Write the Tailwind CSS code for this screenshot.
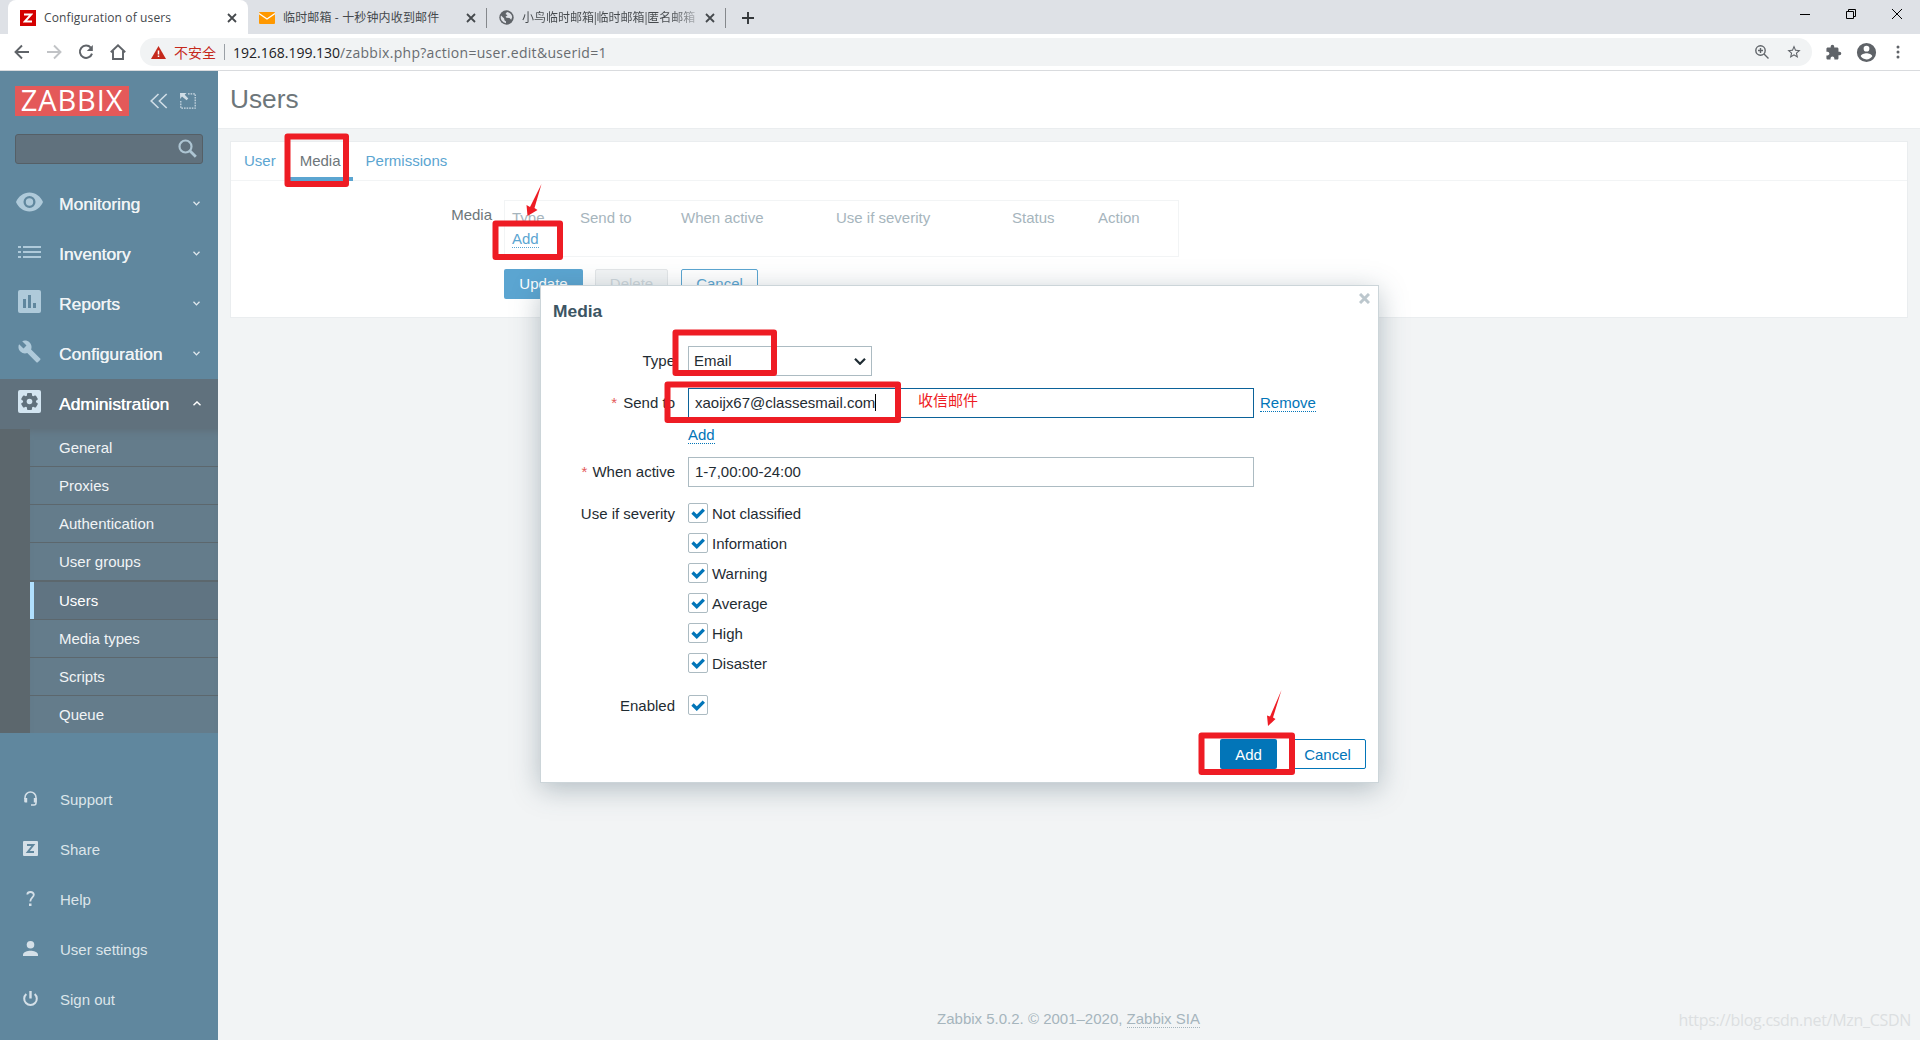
<!DOCTYPE html>
<html lang="en">
<head>
<meta charset="utf-8">
<title>Configuration of users</title>
<script src="https://cdn.jsdelivr.net/npm/@tailwindcss/browser@4"></script>
</head>
<body class="relative flex h-[1040px] w-[1920px] flex-col overflow-hidden bg-[#f2f4f5] font-['Liberation_Sans','Noto_Sans_CJK_SC',sans-serif] text-[15px] leading-[17px] text-[#1f2c33]">

<!-- Browser chrome -->
<div class="flex h-[34px] shrink-0 bg-[#dee1e6] pl-2 font-['Open_Sans','Noto_Sans_CJK_SC',sans-serif] text-[12px] text-[#45494d]">
  <div class="flex w-[240px] items-center rounded-t-lg bg-white pl-3 pt-px">
    <div class="flex size-4 items-center justify-center bg-[#d40000]"><svg class="size-[10px]" viewBox="0 0 10 10" fill="none" stroke="#fff" stroke-width="2"><path d="M1 1.5h7.2L1.8 8.5H9"/></svg></div>
    <span class="ml-2 w-[180px] whitespace-nowrap tracking-[0.12px]">Configuration of users</span>
    <svg class="ml-[3px] size-[10px]" viewBox="0 0 10 10" stroke="#45494d" stroke-width="1.8"><path d="M1 1l8 8M9 1l-8 8"/></svg>
  </div>
  <div class="flex w-[238px] items-center pl-[11px] pt-px">
    <svg class="h-3 w-4" viewBox="0 0 16 12"><rect width="16" height="12" rx="1" fill="#ff9800"/><path d="M0 1.5l8 5.5 8-5.5" fill="none" stroke="#fff" stroke-width="1.3"/></svg>
    <span class="ml-2 w-[183px] whitespace-nowrap tracking-[0.15px]">临时邮箱 - 十秒钟内收到邮件</span>
    <svg class="size-[10px]" viewBox="0 0 10 10" stroke="#45494d" stroke-width="1.8"><path d="M1 1l8 8M9 1l-8 8"/></svg>
  </div>
  <div class="flex w-[239px] items-center pt-px">
    <div class="h-5 w-px bg-[#85888c]"></div>
    <svg class="ml-[12px] size-[15px]" viewBox="0 0 15 15"><circle cx="7.5" cy="7.5" r="7.2" fill="#5f6368"/><path d="M2 5.5l3.2 3 .2 1.8 1.6 1.2v1.8A6 6 0 0 1 2 5.500zM8 2l-1.500 2 2 1.300-2 1.500 1 1 3 .2 1.700 1.800 1-2.800A6 6 0 0 0 8 2z" fill="#dee1e6"/></svg>
    <span class="ml-[8px] w-[176px] whitespace-nowrap bg-linear-to-r from-[#45494d] from-85% to-[#b9bcc1] bg-clip-text text-transparent">小鸟临时邮箱<span class="-mx-[2px]">|</span>临时邮箱<span class="-mx-[2px]">|</span>匿名邮箱</span>
    <svg class="ml-[7px] size-[10px]" viewBox="0 0 10 10" stroke="#45494d" stroke-width="1.8"><path d="M1 1l8 8M9 1l-8 8"/></svg>
  </div>
  <div class="flex items-center pt-px">
    <div class="h-5 w-px bg-[#85888c]"></div>
    <svg class="ml-4 size-3" viewBox="0 0 12 12" stroke="#33373a" stroke-width="1.9"><path d="M6 0v12M0 6h12"/></svg>
  </div>
  <div class="ml-auto flex items-start gap-9 pr-[18px] pt-[9px]">
    <svg class="size-[10px]" viewBox="0 0 10 10" stroke="#000"><path d="M0 5.500h10"/></svg>
    <svg class="size-[10px]" viewBox="0 0 10 10" fill="none" stroke="#000"><path d="M.5 2.500h7v7h-7zM2.500 2.500v-2h7v7h-2"/></svg>
    <svg class="size-[10px]" viewBox="0 0 10 10" stroke="#000"><path d="M0 0l10 10M10 0L0 10"/></svg>
  </div>
</div>
<div class="flex h-[37px] shrink-0 items-center border-b border-[#d9dbde] bg-white pb-px pt-px">
  <svg class="ml-[14px] size-4" viewBox="0 0 16 16" fill="none" stroke="#5f6368" stroke-width="1.900"><path d="M15 8H2M8 1.500L1.500 8 8 14.500"/></svg>
  <svg class="ml-4 size-4" viewBox="0 0 16 16" fill="none" stroke="#c1c3c6" stroke-width="1.900"><path d="M1 8h13M8 1.500L14.500 8 8 14.500"/></svg>
  <svg class="ml-4 size-4" viewBox="0 0 16 16"><path d="M12.800 3.600A6.200 6.200 0 1 0 14 9.600" fill="none" stroke="#5f6368" stroke-width="2"/><path d="M14.800 1v6H8.800z" fill="#5f6368"/></svg>
  <svg class="ml-4 size-4" viewBox="0 0 16 16" fill="none" stroke="#5f6368" stroke-width="1.900"><path d="M.8 8.300L8 1.300l7.200 7M3 7v8h10V7"/></svg>
  <div class="ml-[14px] flex h-7 w-[1672px] items-center rounded-full bg-[#f1f3f4] pl-[11px] font-['Open_Sans','Noto_Sans_CJK_SC',sans-serif] text-[14px]">
    <svg class="h-[13px] w-[15px]" viewBox="0 0 15 13"><path d="M7.500 0L15 13H0z" fill="#c5291c"/><path d="M7.500 4.500v4M7.500 9.500v1.600" stroke="#fff" stroke-width="1.500"/></svg>
    <span class="ml-[8px] text-[#c5291c]">不安全</span>
    <div class="ml-[8px] h-4 w-px bg-[#9aa0a6]"></div>
    <span class="ml-[8px] whitespace-nowrap tracking-[0.300px] text-[#686c70]"><span class="tracking-normal text-[#202124]">192.168.199.130</span>/zabbix.php?action=user.edit&amp;userid=1</span>
    <svg class="ml-auto size-[14px]" viewBox="0 0 14 14" fill="none" stroke="#5f6368" stroke-width="1.400"><circle cx="5.500" cy="5.500" r="4.700"/><path d="M9 9l4.500 4.500M3 5.500h5M5.500 3v5"/></svg>
    <svg class="ml-[17px] mr-[10px] size-4" viewBox="0 0 24 24" fill="#5f6368"><path d="M22 9.240l-7.190-.62L12 2 9.190 8.630 2 9.240l5.460 4.730L5.820 21 12 17.270 18.180 21l-1.630-7.030L22 9.240zM12 15.400l-3.760 2.270 1-4.280-3.320-2.880 4.380-.38L12 6.100l1.710 4.040 4.380.38-3.320 2.880 1 4.280L12 15.400z"/></svg>
  </div>
  <svg class="ml-[13px] size-[17px]" viewBox="0 0 24 24" fill="#5f6368"><path d="M20.500 11H19V7c0-1.100-.9-2-2-2h-4V3.500a2.500 2.500 0 0 0-5 0V5H4c-1.100 0-1.990.9-1.990 2v3.800H3.500c1.490 0 2.700 1.210 2.700 2.700s-1.210 2.700-2.700 2.700H2V20c0 1.100.9 2 2 2h3.800v-1.500c0-1.490 1.210-2.700 2.700-2.700s2.700 1.210 2.700 2.700V22H17c1.100 0 2-.9 2-2v-4h1.500a2.500 2.500 0 0 0 0-5z"/></svg>
  <svg class="ml-[13px] size-[23px]" viewBox="0 0 24 24" fill="#5f6368"><path d="M12 2a10 10 0 1 0 0 20 10 10 0 0 0 0-20zm0 3a3 3 0 1 1 0 6 3 3 0 0 1 0-6zm0 14.200c-2.500 0-4.710-1.280-6-3.220.03-1.990 4-3.080 6-3.080s5.970 1.090 6 3.080a7.200 7.200 0 0 1-6 3.220z"/></svg>
  <svg class="ml-[18px] h-[14px] w-1" viewBox="0 0 4 14" fill="#5f6368"><circle cx="2" cy="2" r="1.500"/><circle cx="2" cy="7" r="1.500"/><circle cx="2" cy="12" r="1.500"/></svg>
</div>

<div class="flex h-[969px]">
  <!-- Sidebar -->
  <aside class="flex w-[218px] shrink-0 flex-col bg-[#60879e] text-[#eaf0f3]">
    <div class="flex h-[63px] items-start pl-[15px] pt-[15px]">
      <div class="flex h-[30px] w-[114px] items-center justify-center bg-[#e45959] pb-[2px] font-['Open_Sans',sans-serif] text-[29px] font-normal leading-[28px] tracking-[0.900px] text-white">ZABBIX</div>
      <svg class="ml-[21px] mt-[7px] h-4 w-[18px]" viewBox="0 0 18 16" fill="none" stroke="#cfdde6" stroke-width="1.600"><path d="M8.500 1L1.200 8l7.300 7M16.700 1L9.400 8l7.300 7"/></svg>
      <svg class="ml-[12px] mt-[7px] size-4" viewBox="0 0 16 16"><path d="M8 .8h7.200v14.400H.8V8" fill="none" stroke="#cfdde6" stroke-width="1.200" stroke-dasharray="1.600 1"/><path d="M0 0h6.500L4.700 1.800l3.600 3.700-1.700 1.700L2 3.600.2 6z" fill="#cfdde6"/></svg>
    </div>
    <div class="ml-[15px] flex h-[30px] w-[188px] items-center justify-end rounded-[3px] border border-[#555f66] bg-[#60717d] pb-px pr-[5px]">
      <svg class="size-[19px]" viewBox="0 0 19 19" fill="none" stroke="#adc5d3"><circle cx="7.500" cy="7.500" r="6" stroke-width="2.200"/><path d="M11.800 11.800l6 6" stroke-width="2.800"/></svg>
    </div>
    <nav class="mt-[15px] text-[17.400px] leading-[18px] text-[#eff3f5] [text-shadow:0.3px_0_0_currentColor]">
      <div class="flex h-[50px] items-center pb-px pl-4">
        <svg class="mt-[-3px] h-[20px] w-[27px]" viewBox="0 0 27 20"><path fill="#afcada" fill-rule="evenodd" d="M13.500.5C7.500.5 2.300 4.400 0 10c2.300 5.600 7.500 9.500 13.500 9.500S24.700 15.600 27 10C24.700 4.400 19.500.5 13.500.5zm0 15.500a6 6 0 1 1 0-12 6 6 0 0 1 0 12zm0-9.700a3.700 3.700 0 1 0 0 7.400 3.700 3.700 0 0 0 0-7.400z"/></svg>
        <span class="ml-4 w-[134px]">Monitoring</span>
        <svg class="h-[5px] w-[7px]" viewBox="0 0 7 5" fill="none" stroke="#e1e9ee" stroke-width="1.300"><path d="M.5.7l3 3.200 3-3.200"/></svg>
      </div>
      <div class="flex h-[50px] items-center pb-px pl-[18px]">
        <svg class="mt-[-3px] h-[14px] w-[23px]" viewBox="0 0 23 14" fill="#afcada"><path d="M0 1h3v2H0zM5 1h18v2H5zM0 6h3v2H0zM5 6h18v2H5zM0 11h3v2H0zM5 11h18v2H5z"/></svg>
        <span class="ml-[18px] w-[134px]">Inventory</span>
        <svg class="h-[5px] w-[7px]" viewBox="0 0 7 5" fill="none" stroke="#e1e9ee" stroke-width="1.300"><path d="M.5.7l3 3.200 3-3.200"/></svg>
      </div>
      <div class="flex h-[50px] items-center pb-px pl-[18px]">
        <svg class="mt-[-4px] size-[23px]" viewBox="0 0 23 23"><rect width="23" height="23" rx="2" fill="#afcada"/><path d="M5 9h3v9H5zM10 5h3v13h-3zM15 13h3v5h-3z" fill="#60879e"/></svg>
        <span class="ml-[18px] w-[134px]">Reports</span>
        <svg class="h-[5px] w-[7px]" viewBox="0 0 7 5" fill="none" stroke="#e1e9ee" stroke-width="1.300"><path d="M.5.7l3 3.200 3-3.200"/></svg>
      </div>
      <div class="flex h-[50px] items-center pb-px pl-[18px]">
        <svg class="mt-[-4px] size-[23px]" viewBox="0.500 0.500 23 23" fill="#afcada"><path d="M22.700 19l-9.100-9.100c.9-2.300.4-5-1.500-6.900-2-2-5-2.400-7.400-1.300L9 6 6 9 1.600 4.700C.4 7.100.9 10.100 2.900 12.100c1.900 1.900 4.600 2.400 6.900 1.500l9.100 9.100c.4.400 1 .4 1.400 0l2.300-2.300c.5-.4.5-1.100.1-1.400z"/></svg>
        <span class="ml-[18px] w-[134px]">Configuration</span>
        <svg class="h-[5px] w-[7px]" viewBox="0 0 7 5" fill="none" stroke="#e1e9ee" stroke-width="1.300"><path d="M.5.7l3 3.200 3-3.200"/></svg>
      </div>
      <div class="flex h-[50px] items-center bg-[#60717d] pb-px pl-[18px] text-white">
        <svg class="mt-[-4px] size-[23px]" viewBox="0 0 23 23"><rect width="23" height="23" rx="2" fill="#d3e5f1"/><g fill="#60717d"><circle cx="11.500" cy="11.500" r="6.500"/><rect x="9" y="3" width="5" height="17" rx="1"/><rect x="9" y="3" width="5" height="17" rx="1" transform="rotate(60 11.500 11.500)"/><rect x="9" y="3" width="5" height="17" rx="1" transform="rotate(120 11.500 11.500)"/></g><circle cx="11.500" cy="11.500" r="2.800" fill="#d3e5f1"/></svg>
        <span class="ml-[18px] w-[134px]">Administration</span>
        <svg class="h-[5px] w-[8px]" viewBox="0 0 8 5" fill="none" stroke="#fff" stroke-width="1.400"><path d="M.5 4.200l3.500-3.300 3.500 3.300"/></svg>
      </div>
    </nav>
    <ul class="border-l-[30px] border-[#5c676d] bg-[#647c8b] text-[#f1f4f6] shadow-[inset_0_7px_7px_-5px_#5f6f7a]">
      <li class="flex h-[38px] items-center border-b border-[#5c676d] pb-px pl-[29px]">General</li>
      <li class="flex h-[38px] items-center border-b border-[#5c676d] pb-px pl-[29px]">Proxies</li>
      <li class="flex h-[38px] items-center border-b border-[#5c676d] pb-px pl-[29px]">Authentication</li>
      <li class="flex h-[38px] items-center border-b border-[#5c676d] pb-px pl-[29px]">User groups</li>
      <li class="flex h-[39px] items-stretch border-y border-[#5c676d] bg-[#607482] text-white"><span class="w-1 bg-[#b0dffd]"></span><span class="flex items-center pb-px pl-[25px]">Users</span></li>
      <li class="flex h-[38px] items-center border-b border-[#5c676d] pb-px pl-[29px]">Media types</li>
      <li class="flex h-[38px] items-center border-b border-[#5c676d] pb-px pl-[29px]">Scripts</li>
      <li class="flex h-[37px] items-center pb-px pl-[29px]">Queue</li>
    </ul>
    <div class="mt-[42px] text-[#dce5ea]">
      <div class="flex h-[50px] items-center pb-px pl-[23px]"><svg class="mt-[-2px] h-[15px] w-[15px]" viewBox="0 0 15 15"><path d="M2 8V6.500a5.500 5.500 0 0 1 11 0V12q0 2-2 2H8" fill="none" stroke="#d5e0e8" stroke-width="1.500"/><path d="M1.200 7h3v4.500h-2q-1 0-1-1zM10.800 7h3v4.500h-3z" fill="#d5e0e8"/></svg><span class="ml-[22px]">Support</span></div>
      <div class="flex h-[50px] items-center pb-px pl-[23px]"><svg class="mt-[-2px] size-[15px]" viewBox="0 0 15 15"><rect width="15" height="15" rx="1" fill="#d5e0e8"/><path d="M4 4h6.300L4.800 11H11" fill="none" stroke="#60879e" stroke-width="2"/></svg><span class="ml-[22px]">Share</span></div>
      <div class="flex h-[50px] items-center pb-px pl-[23px]"><svg class="mt-[-2px] size-[15px]" viewBox="0 0 15 15"><path d="M4.300 3.500Q4.500 1 7.500 1T10.800 3.700C10.800 6.300 7.300 6.500 7.300 10.500" fill="none" stroke="#d5e0e8" stroke-width="1.800"/><path d="M6 12.500h2.500V15H6z" fill="#d5e0e8"/></svg><span class="ml-[22px]">Help</span></div>
      <div class="flex h-[50px] items-center pb-px pl-[23px]"><svg class="mt-[-2px] size-[15px]" viewBox="0 0 15 15" fill="#d5e0e8"><circle cx="7.500" cy="3.800" r="3.800"/><path d="M0 15v-1.500c0-2.500 4.500-3.800 7.500-3.800s7.500 1.300 7.500 3.800V15z"/></svg><span class="ml-[22px]">User settings</span></div>
      <div class="flex h-[50px] items-center pb-px pl-[23px]"><svg class="mt-[-2px] size-[15px]" viewBox="0 0 15 15" fill="none" stroke="#d5e0e8"><path d="M3.300 3a6.300 6.300 0 1 0 8.400 0" stroke-width="2"/><path d="M7.500 0v7.500" stroke-width="2.400"/></svg><span class="ml-[22px]">Sign out</span></div>
    </div>
  </aside>

  <!-- Page -->
  <main class="flex grow flex-col text-[#6d767a]">
    <header class="flex h-[58px] items-center border-b border-[#eaedef] bg-white pb-px pl-3 text-[26.250px] leading-8"><h1>Users</h1></header>
    <section class="ml-3 mt-3 h-[177px] w-[1678px] border border-[#eaedef] bg-white">
      <div class="flex h-[39px] border-b border-[#f2f4f5] text-[#5ba5d1]">
        <span class="flex items-center pb-px pl-[13px] pr-3">User</span>
        <span class="flex h-[39px] items-start border-b-4 border-[#5ba5d1] px-3 pt-[10px] text-[#6d767a]">Media</span>
        <span class="flex items-center pb-px pl-[13px]">Permissions</span>
      </div>
      <div class="flex pt-[19px]">
        <span class="mr-3 w-[261px] pt-[6px] text-right">Media</span>
        <div class="h-[57px] w-[675px] border border-[#f2f4f5] pl-[7px] pt-2 text-[#a6b5bd]">
          <div class="grid grid-cols-[68px_101px_155px_176px_86px_auto]"><span>Type</span><span>Send to</span><span>When active</span><span>Use if severity</span><span>Status</span><span>Action</span></div>
          <a class="mt-1 block w-fit border-b border-dotted border-[#5ba5d1] text-[#5ba5d1]">Add</a>
        </div>
      </div>
      <div class="ml-[273px] mt-3 flex h-[30px]">
        <span class="flex w-[79px] items-center justify-center rounded-[2px] bg-[#5ba5d1] pb-px text-white">Update</span>
        <span class="ml-3 flex w-[73px] items-center justify-center rounded-[2px] border border-[#e3e6e8] bg-[#f2f4f5] pb-px text-[#ced6da]">Delete</span>
        <span class="ml-[13px] flex w-[77px] items-center justify-center rounded-[2px] border border-[#5ba5d1] pb-px text-[#5ba5d1]">Cancel</span>
      </div>
    </section>
    <footer class="mt-auto flex h-[43px] justify-center pr-px pt-[13px] text-[#a6b5bd]"><p>Zabbix 5.0.2. © 2001–2020, <a class="border-b border-dotted border-[#a6b5bd]">Zabbix SIA</a></p></footer>
  </main>
</div>

<!-- Media dialog -->
<div class="absolute left-[540px] top-[285px] h-[498px] w-[839px] border border-[#ccd5d9] bg-white shadow-[0_6px_26px_rgba(60,85,99,0.350)]">
  <svg class="absolute right-[8px] top-[7px] size-[11px]" viewBox="0 0 11 11" stroke="#bcc7cd" stroke-width="3"><path d="M1 1l9 9M10 1l-9 9"/></svg>
  <h4 class="pl-3 pt-[15px] text-[17.400px] font-bold leading-[20px] text-[#3c5563]">Media</h4>
  <div class="mt-[25px] grid grid-cols-[134px_1fr] gap-x-[13px]">
    <span class="pt-[6px] text-right">Type</span>
    <div class="flex h-[30px] w-[184px] items-center justify-between border border-[#acbbc2] pb-px pl-[5px] pr-[5px]"><span>Email</span><svg class="mt-px h-[7px] w-3" viewBox="0 0 12 7" fill="none" stroke="#1f2c33" stroke-width="2.200"><path d="M1 .8l5 5 5-5"/></svg></div>
    <span class="mt-[12px] pt-[6px] text-right"><span class="mr-[2px] text-[#e45959]">*</span> Send to</span>
    <div class="mt-[12px] flex items-center"><div class="flex h-[30px] w-[566px] items-center border border-[#0b6299] pb-px pl-[6px]">xaoijx67@classesmail.com<span class="h-[17px] w-px bg-black"></span></div><a class="ml-[6px] border-b border-dotted border-[#0275b8] text-[#0275b8]">Remove</a></div>
    <span></span>
    <div class="mt-[8px] h-[31px]"><a class="block w-fit border-b border-dotted border-[#0275b8] text-[#0275b8]">Add</a></div>
    <span class="pt-[6px] text-right"><span class="mr-px text-[#e45959]">*</span> When active</span>
    <div class="flex h-[30px] w-[566px] items-center border border-[#acbbc2] pb-px pl-[6px]">1-7,00:00-24:00</div>
    <span class="mt-4 pt-[2px] text-right">Use if severity</span>
    <div class="mt-4 flex flex-col gap-[10px]" id="severities"></div>
    <span class="mt-[22px] pt-[2px] text-right">Enabled</span>
    <div class="mt-[22px]" id="enabled"></div>
  </div>
  <div class="mt-6 flex h-[30px] justify-end pr-3">
    <span class="flex w-[57px] items-center justify-center rounded-[2px] bg-[#0275b8] text-white">Add</span>
    <span class="ml-3 flex w-[77px] items-center justify-center rounded-[2px] border border-[#0275b8] text-[#0275b8]">Cancel</span>
  </div>
</div>
<script>
  const box = label => `<div class="flex h-5 items-center gap-1"><span class="flex size-5 items-center justify-center rounded-[2px] border border-[#acbbc2]"><svg class="h-[11px] w-[14px]" viewBox="0 0 14 11" fill="none" stroke="#0275b8" stroke-width="3.300"><path d="M1.500 4.500l4.300 4.200 7-7"/></svg></span><span class="pt-px">${label}</span></div>`;
  document.getElementById('severities').innerHTML = ['Not classified', 'Information', 'Warning', 'Average', 'High', 'Disaster'].map(box).join('');
  document.getElementById('enabled').innerHTML = box('');
</script>

<!-- Annotations -->
<svg class="absolute left-0 top-0 h-[1040px] w-[1920px]" viewBox="0 0 1920 1040">
  <g fill="none" stroke="#ee1c24" stroke-width="6" stroke-linejoin="round">
    <rect x="287.500" y="136.500" width="58.500" height="47.500"/>
    <rect x="495.500" y="223.500" width="64.500" height="33.500"/>
    <rect x="675.500" y="332.500" width="98.500" height="40.500"/>
    <rect x="667.500" y="384.500" width="230.500" height="35.500"/>
    <rect x="1201.500" y="735.500" width="90.500" height="36.500"/>
  </g>
  <path d="M541.500 184L534.500 208 537.500 210 527.500 216 526.500 205 530 207z" fill="#ee1c24"/>
  <path d="M1281.500 690L1273 717.500 1275.500 719 1268 726 1267 715.500 1270 716.500z" fill="#ee1c24"/>
</svg>
<span class="absolute left-[918px] top-[392px] whitespace-nowrap text-[#ee1c24]">收信邮件</span>
<span class="absolute right-[9px] top-[1009px] whitespace-nowrap font-['Open_Sans',sans-serif] text-[16px] leading-[22px] tracking-[-0.300px] text-[#dcdfe1]">https://blog.csdn.net/Mzn_CSDN</span>
</body>
</html>
